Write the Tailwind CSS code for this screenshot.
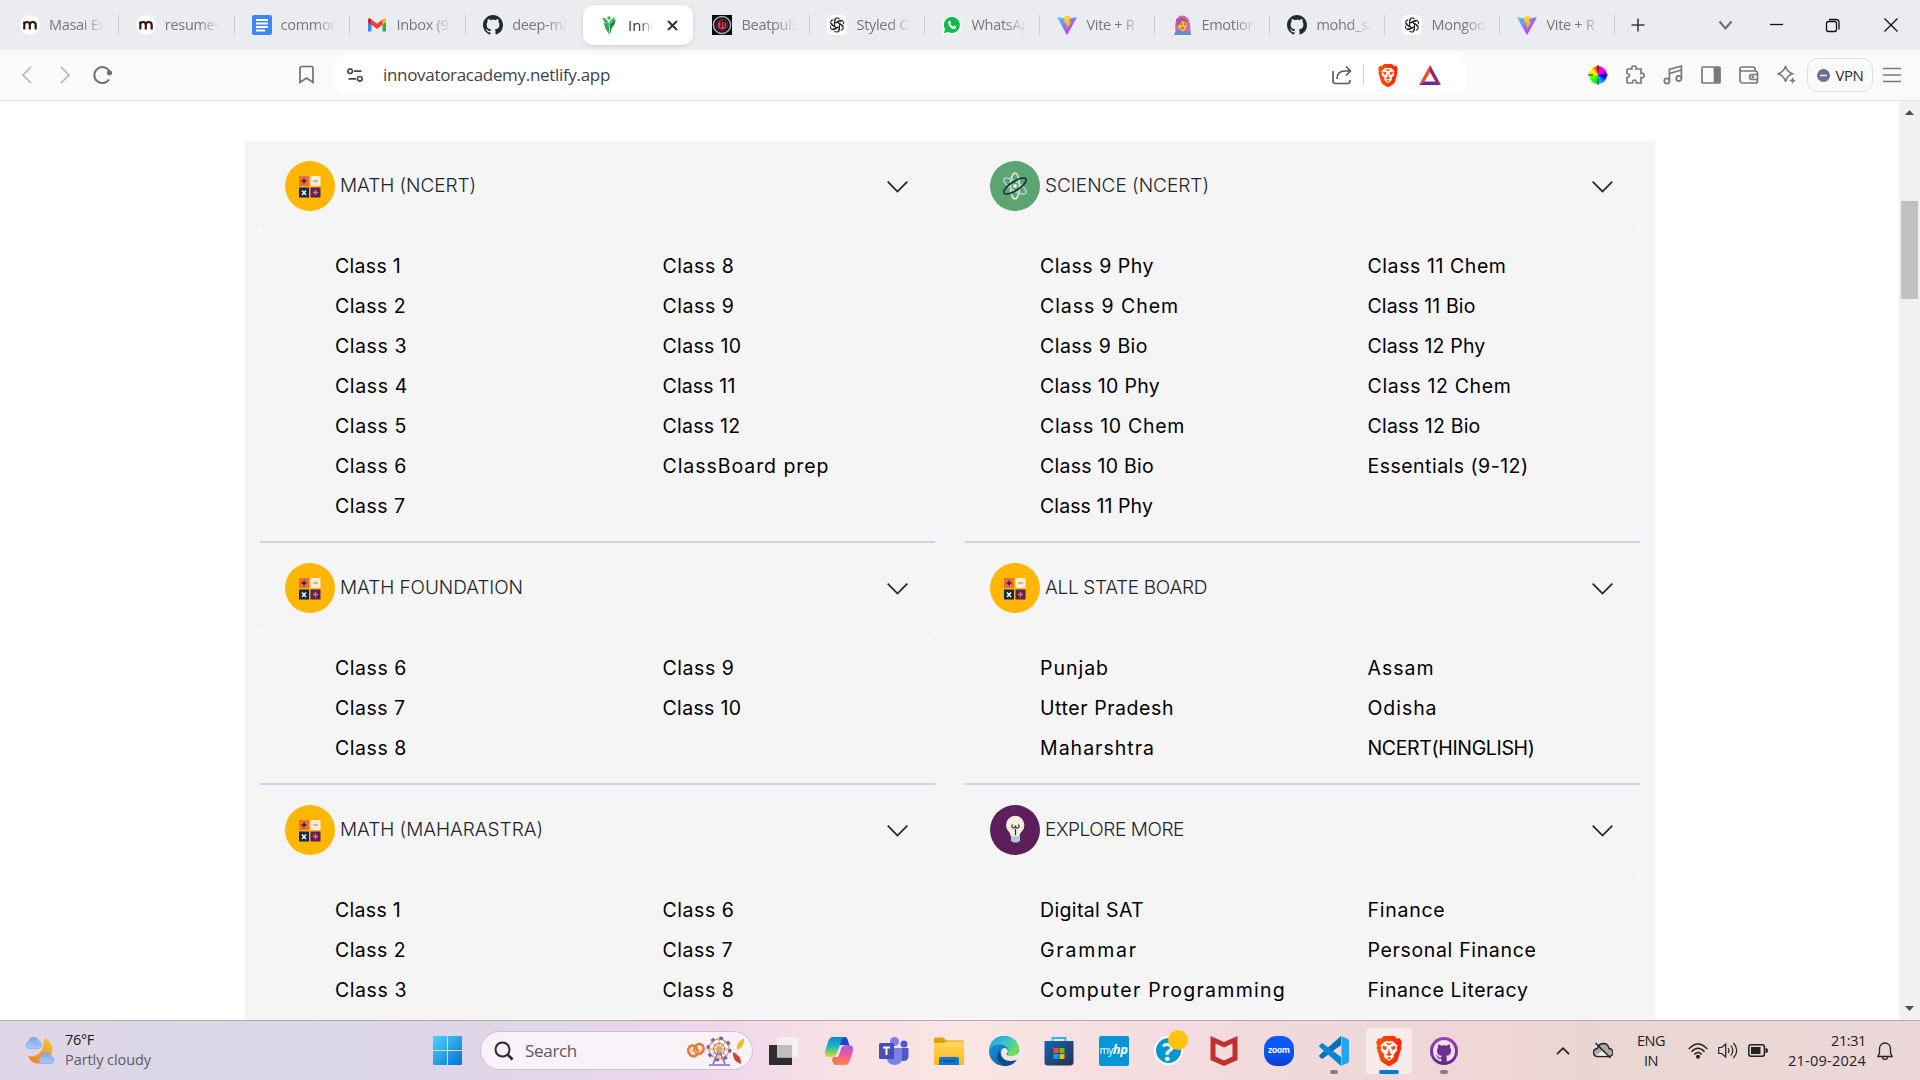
<!DOCTYPE html>
<html lang="en">
<head>
<meta charset="utf-8">
<title>Innovator Academy</title>
<script src="https://cdn.jsdelivr.net/npm/@tailwindcss/browser@4"></script>
</head>
<body class="w-[1920px] h-[1080px] overflow-hidden bg-white flex flex-col font-['Open_Sans','Noto_Sans',sans-serif]">

<svg class="absolute size-0">
  <defs>
    <linearGradient id="gVite" x1="0" y1="0" x2="1" y2="1"><stop offset="0" stop-color="#41d1ff"/><stop offset=".6" stop-color="#a259ff"/><stop offset="1" stop-color="#bd34fe"/></linearGradient>
    <linearGradient id="gBolt" x1="0" y1="0" x2="0" y2="1"><stop offset="0" stop-color="#ffdd35"/><stop offset="1" stop-color="#ffa800"/></linearGradient>
    <linearGradient id="gBrave" x1="0" y1="0" x2="1" y2="0"><stop offset="0" stop-color="#ff5500"/><stop offset="1" stop-color="#ff2000"/></linearGradient>
    <linearGradient id="gWin" x1="0" y1="0" x2="1" y2="1"><stop offset="0" stop-color="#4fd3fc"/><stop offset="1" stop-color="#0670cf"/></linearGradient>
    <linearGradient id="gMoon" x1="0" y1="1" x2="1" y2="0"><stop offset="0" stop-color="#f47b16"/><stop offset="1" stop-color="#f7c637"/></linearGradient>
    <linearGradient id="gCloud" x1="0" y1="0" x2="0" y2="1"><stop offset="0" stop-color="#7fa5ec"/><stop offset="1" stop-color="#a9cbfb"/></linearGradient>
    <linearGradient id="gCopA" x1="0" y1="0" x2="0" y2="1"><stop offset="0" stop-color="#1283dc"/><stop offset=".5" stop-color="#22b8b8"/><stop offset="1" stop-color="#e6d824"/></linearGradient>
    <linearGradient id="gCopB" x1="0" y1="0" x2="0" y2="1"><stop offset="0" stop-color="#a95cf0"/><stop offset=".5" stop-color="#ee5a97"/><stop offset="1" stop-color="#fb8a4a"/></linearGradient>
    <linearGradient id="gFolder" x1="0" y1="0" x2="0" y2="1"><stop offset="0" stop-color="#ffd75e"/><stop offset="1" stop-color="#fcb814"/></linearGradient>
    <linearGradient id="gEdgeA" x1="0" y1="0" x2="1" y2=".6"><stop offset="0" stop-color="#1f9fe0"/><stop offset=".5" stop-color="#35c1d4"/><stop offset="1" stop-color="#6ee058"/></linearGradient>
    <linearGradient id="gEdgeB" x1="0" y1="0" x2="1" y2="1"><stop offset="0" stop-color="#1b9de2"/><stop offset="1" stop-color="#0c4fa0"/></linearGradient>
    <linearGradient id="gStore" x1="0" y1="0" x2="1" y2="1"><stop offset="0" stop-color="#1366b5"/><stop offset="1" stop-color="#28304e"/></linearGradient>
    <linearGradient id="gZoom" x1="0" y1="0" x2="0" y2="1"><stop offset="0" stop-color="#0b5cff"/><stop offset=".6" stop-color="#0b52fa"/><stop offset="1" stop-color="#0a3ad0"/></linearGradient>
    <linearGradient id="gGh" x1="0" y1="0" x2="0" y2="1"><stop offset="0" stop-color="#9c3fc0"/><stop offset="1" stop-color="#5b2a86"/></linearGradient>
    <symbol id="github" viewBox="0 0 16 16"><path d="M8 0C3.58 0 0 3.58 0 8c0 3.54 2.29 6.53 5.47 7.59.4.07.55-.17.55-.38 0-.19-.01-.82-.01-1.49-2.01.37-2.53-.49-2.69-.94-.09-.23-.48-.94-.82-1.13-.28-.15-.68-.52-.01-.53.63-.01 1.08.58 1.23.82.72 1.21 1.87.87 2.33.66.07-.52.28-.87.51-1.07-1.78-.2-3.64-.89-3.64-3.95 0-.87.31-1.59.82-2.15-.08-.2-.36-1.02.08-2.12 0 0 .67-.21 2.2.82.64-.18 1.32-.27 2-.27s1.36.09 2 .27c1.53-1.04 2.2-.82 2.2-.82.44 1.1.16 1.92.08 2.12.51.56.82 1.27.82 2.15 0 3.07-1.87 3.75-3.65 3.95.29.25.54.73.54 1.48 0 1.07-.01 1.93-.01 2.2 0 .21.15.46.55.38A8.01 8.01 0 0 0 16 8c0-4.42-3.58-8-8-8z"/></symbol>
    <symbol id="brave" viewBox="0 0 24 28"><path d="M7 0h10l2.400 2.600 2.800-.4L24 6l-1 3 .6 2-3.400 11.200Q19.600 24 17.800 25L12 28.600 6.200 25Q4.400 24 3.800 22.200L.4 11 1 9 0 6l1.800-3.800 2.800.4z" fill="url(#gBrave)"/><path d="M12 5.200 8.600 4.600 4 8.800l1 1.900-.8 2.400 3.600 4.300-.5 2.200L9 21l3 2.400 3-2.400 1.700-1.400-.5-2.200 3.600-4.300-.8-2.400 1-1.900-4.600-4.200z" fill="#fff"/><path d="M5.800 9.200l4.400.9-1 3.200-2.600-.9zM18.200 9.200l-4.400.9 1 3.200 2.600-.9zM12 10.500l1 5.500 2 1.200-3 1.800-3-1.800 2-1.200zM10 20.500l2-1 2 1-2 1.500zM8.400 6l3.600 1 3.600-1-3.600 3z" fill="#fb4a12"/></symbol>
    <symbol id="vite" viewBox="0 0 20 20"><path d="M.3 2.800 9.600 19.600q.4.700.8 0L19.700 2.800q.3-.6-.5-.6L10 3.800.8 2.200q-.8 0-.5.600z" fill="url(#gVite)"/><path d="M14 .2 7.600 1.400 7.200 8l2.200-.4-.6 3.200 1.800-.4-1 4.300 4.600-7.600-2.300.4z" fill="url(#gBolt)"/></symbol>
    <symbol id="openai" viewBox="0 0 20 20"><rect width="20" height="20" rx="5" fill="#fff"/><g fill="none" stroke="#1d1d1d" stroke-width="1.050"><path id="pt" d="M7.600 10V5.600a2.700 2.700 0 0 1 4.900-1.500M7.600 8.400l3.700-2.100a2.700 2.700 0 0 1 3 .2"/><use href="#pt" transform="rotate(60 10 10)"/><use href="#pt" transform="rotate(120 10 10)"/><use href="#pt" transform="rotate(180 10 10)"/><use href="#pt" transform="rotate(240 10 10)"/><use href="#pt" transform="rotate(300 10 10)"/></g></symbol>
    <symbol id="masai" viewBox="0 0 20 20"><circle cx="10" cy="10" r="10" fill="#fff"/><path d="M4.300 14.500V6.500M4.300 9.500q.4-2.500 2.700-2.500 2.800 0 2.800 3v4.500M9.800 10q.2-3 2.900-3 3 0 3 3v4.500" fill="none" stroke="#3a1510" stroke-width="2.200"/></symbol>
    <symbol id="docs" viewBox="0 0 20 20"><rect width="20" height="20" rx="2" fill="#4285f4"/><path d="M4 5h12M4 8.500h12M4 12h12M4 15.500h9" stroke="#fff" stroke-width="1.800"/></symbol>
    <symbol id="gmail" viewBox="0 0 20 20"><path d="M1 5v11.500h3.500V8z" fill="#4285f4"/><path d="M19 5v11.500h-3.500V8z" fill="#34a853"/><path d="M15.500 4.500V10L19 7V5q0-2-2-1.600z" fill="#fbbc04"/><path d="M1 5v2.200l3.500 3V4.600L3 3.400Q1 3 1 5z" fill="#c5221f"/><path d="M4.500 4.600v5.200L10 14l5.500-4.200V4.600L10 8.800z" fill="#ea4335"/></symbol>
    <symbol id="sprout" viewBox="0 0 20 20"><path d="M10.800 9.500 16.500 3.500q.3 5.500-3.500 9L10.800 20z" fill="#1e8443"/><path d="M4.500 7.500q4 1 5.700 4v8Q6 14 4.500 7.500z" fill="#2fa555"/><path d="M3.500 2.500q5 1 6.500 6.500 1.500-5 5.500-7-1 6-4.500 8.500h-2Q4.500 8 3.500 2.500z" fill="#37b862"/><circle cx="10" cy="3" r="1.700" fill="#37ae5c"/></symbol>
    <symbol id="beat" viewBox="0 0 20 20"><path fill="#080808" d="M0 0h20v20H0z"/><circle cx="10" cy="10" r="8.600" fill="none" stroke="#b6a3c8" stroke-width="1.500"/><circle cx="10" cy="10" r="6" fill="none" stroke="#54405f"/><circle cx="10" cy="10" r="4.500" fill="#d83a55"/><path d="M9 13V7l3-.8v5.600" fill="none" stroke="#320812" stroke-width="1.200"/></symbol>
    <symbol id="wa" viewBox="0 0 20 20"><path d="M0 20 1.500 14.500A9.700 9.700 0 1 1 5.600 18.600z" fill="#fff"/><path d="M2 18l1-4A8 8 0 1 1 6.200 17z" fill="#0abf49"/><path d="M6.500 6.200q1-1.300 1.900 0l.7 1.600-.8 1.200q1 1.900 2.900 2.700l1-1.100 2 1q.3 1.600-1.500 2.400c-3.400.7-7.700-4-6.200-7.800z" fill="#fff"/></symbol>
    <symbol id="emo" viewBox="0 0 20 20"><path d="M4 20Q1 3 9 .5q8-.5 9 8.500l1 11z" fill="#d069b5"/><path d="M6 7q4-4 9 0l-1 7-4 3-4-5z" fill="#f2bd31"/><path d="M2 20q2-6 7-5l3 2 5-1 2 4z" fill="#5e91c7"/><path d="M4 4q8-5 12 4L10 6l-5 6z" fill="#b74ea1"/><path d="M8 9h2M12 9h2M9 13h3" stroke="#713b42"/></symbol>
    <symbol id="math" viewBox="0 0 50 50"><circle cx="25" cy="25" r="25" fill="#fdb602"/><path fill="#f26b35" d="M14 15h10v10H14z"/><path fill="#fbeede" d="M25.500 15h10v10h-10z"/><path fill="#122a4b" d="M14 26.500h10v10H14z"/><path fill="#5d1e5c" d="M25.500 26.500h10v10h-10z"/><path d="M16.500 20h5M19 17.500v5" stroke="#1c2947" stroke-width="1.400"/><path d="M28 20h5" stroke="#ef7b4b" stroke-width="1.200"/><path d="M17 29.500l4 4.500M21 29.500 17 34" stroke="#fff" stroke-width="1.500"/><path d="M28 31.500h5M30.500 28.700v5.600" stroke="#d98168" stroke-width="1.300"/></symbol>
    <symbol id="science" viewBox="0 0 50 50"><circle cx="25" cy="25" r="25" fill="#5ca470"/><g fill="none" stroke-width="1.600"><ellipse cx="25" cy="25" rx="4.500" ry="13" stroke="#e8e9ca"/><ellipse cx="25" cy="25" rx="4.500" ry="13" transform="rotate(-57 25 25)" stroke="#a9d6cf"/><ellipse cx="25" cy="25" rx="4.500" ry="13" transform="rotate(57 25 25)" stroke="#152d4c"/></g><circle cx="25" cy="25" r="2" fill="#f5efd8"/></symbol>
    <symbol id="bulb" viewBox="0 0 50 50"><circle cx="25" cy="25" r="25" fill="#5d1e5b"/><path d="M20.500 31q0-2.500-1.800-4.500A9.200 9.200 0 1 1 31.700 26.500Q29.500 29 29.500 31z" fill="#f6eddf"/><path d="M21 31h9v5.500h-2v1h-5v-1h-2z" fill="#a9cddb"/><path d="M25.500 30v-6M22.500 19.500q-1.500 3.500 1.200 3.500 1.800 0 1.800-2.500 0 2.500 1.800 2.500 2.700 0 1.200-3.500" fill="none" stroke="#23304f" stroke-width="1.200"/></symbol>
  </defs>
</svg>

<!-- Tab strip -->
<header class="h-[50px] shrink-0 bg-[#ebecf0] flex items-center text-[15px] text-[#75777c]">
  <div id="tabs" class="flex items-center pl-[3px] h-full"></div>
  <div class="w-[45px] flex justify-center"><svg class="size-[14px]" viewBox="0 0 14 14"><path d="M7 .5v13M.5 7h13" stroke="#3c3d42" stroke-width="1.600"/></svg></div>
  <div class="ml-auto flex items-center">
    <svg class="w-[51px] h-5" viewBox="-25.500 -10 51 20"><path d="M-6-3.500 0 3.500 6-3.500" fill="none" stroke="#67686d" stroke-width="2"/></svg>
    <svg class="w-[55px] h-5" viewBox="-25.500 -10 55 20"><path d="M-6.500-.5h13" stroke="#111" stroke-width="1.300"/></svg>
    <svg class="w-[56px] h-5" viewBox="-26.500 -10 56 20"><rect x="-6" y="-3.500" width="10" height="10" rx="2" fill="none" stroke="#111" stroke-width="1.300"/><path d="M-3.500-5.500h7q3 0 3 3v7" fill="none" stroke="#111" stroke-width="1.300"/></svg>
    <svg class="w-[58px] h-5" viewBox="-29 -10 58 20"><path d="M-6.500-6.500l13 13M6.500-6.500l-13 13" stroke="#111" stroke-width="1.300"/></svg>
  </div>
</header>

<!-- Toolbar -->
<nav class="h-[51px] shrink-0 bg-[#fafafa] border-b border-[#e7e7ee] flex items-center">
  <svg class="w-[335px] h-10 shrink-0" viewBox="0 0 335 40" fill="none" stroke="#b5b6ba" stroke-width="1.700"><path d="M31 12l-8 8 8 8M61 12l8 8-8 8"/><g stroke="#6e7076" stroke-width="2"><path d="M109 24.500a8 8 0 1 1 .2-8.500"/><circle cx="109.500" cy="17.800" r="1.600" fill="#6e7076"/></g><path d="M300 27.500V13.500q0-2 2-2h9q2 0 2 2v14l-6.500-4.500z" stroke="#6e7076"/></svg>
  <div class="w-[1132px] h-10 shrink-0 bg-white rounded-[12px] flex items-center">
    <svg class="ml-3 size-4" viewBox="0 0 16 16" fill="none" stroke="#45474c" stroke-width="1.700"><circle cx="3.200" cy="4.200" r="2.300"/><path d="M7 4.200h7.500M1.500 11.800H9"/><circle cx="12.800" cy="11.800" r="2.300"/></svg>
    <span data-w="227" class="ml-5 text-[17px] leading-6 text-[#404248] whitespace-nowrap">innovatoracademy.netlify.app</span>
    <div class="ml-auto flex items-center mr-[26px]">
      <svg class="size-5" viewBox="0 0 20 20" fill="none" stroke="#55575d" stroke-width="1.600"><path d="M1 6v10q0 2.500 2.500 2.500h12q2.500 0 2.500-2.500v-1M5 14q0-8 8-8h5M14 1.500 18.500 6 14 10.500"/></svg>
      <div class="w-px h-5 bg-[#cfd0d4] ml-[11px] mr-[14px]"></div>
      <svg class="w-5 h-[23px]"><use href="#brave"/></svg>
      <svg class="ml-[21px] w-[22px] h-[20px]" viewBox="0 0 22 20"><path d="M11 0 0 20l5.500-3.300L11 7z" fill="#ff4724"/><path d="M11 0l11 20-5.500-3.300L11 7z" fill="#9e1f63"/><path d="M0 20h22l-5.500-3.500h-11z" fill="#662d91"/></svg>
    </div>
  </div>
  <div class="ml-auto flex items-center gap-[18px] text-[#77797e] pr-[19px]">
    <div class="relative size-[18px] rounded-full bg-[conic-gradient(#f08,#f0f,#00f,#0af,#0f0,#8f0,#ff0,#f00)]"><svg class="absolute -inset-px size-5" viewBox="0 0 20 20"><path d="M10 0v6M10 14v6M0 10h5M15 10h5" stroke="#222"/></svg></div>
    <svg class="size-5" viewBox="0 0 20 20" fill="none" stroke="currentColor" stroke-width="1.700"><path d="M3 4h4q-1-3 2-3t2 3h5v4.500q3-1 3 2t-3 2V18h-4.500q0-3-2-3t-2 3H3q-1 0-1-1v-4.500q2.500-.5 2.500-2T2 8.500V5q0-1 1-1z"/></svg>
    <svg class="size-5" viewBox="0 0 20 20" fill="none" stroke="currentColor" stroke-width="1.700"><circle cx="3.800" cy="16" r="2.600"/><circle cx="15.800" cy="13.500" r="2.600"/><path d="M6.400 16V4.500L18.400 1v12.500M6.400 8.500l12-3.500"/></svg>
    <svg class="size-5" viewBox="0 0 20 20" fill="none" stroke="currentColor" stroke-width="1.700"><rect x="1" y="2" width="18" height="16" rx="1"/><path d="M13.500 3h5v14h-5z" fill="currentColor"/></svg>
    <svg class="size-5" viewBox="0 0 20 20" fill="none" stroke="currentColor" stroke-width="1.700"><path d="M16 6V4q0-2-2-2H3Q1 2 1 4t2 2h13q2.500 0 2.500 2v8q0 2-2 2H4q-3 0-3-3V4M18.500 9.500H13q-2.500 0-2.500 2.500t2.500 2.500h5.500"/><circle cx="13.800" cy="12" r=".6"/></svg>
    <svg class="size-5" viewBox="0 0 20 20" fill="none" stroke="currentColor" stroke-width="1.500"><path d="M8.500 1q1.300 5.800 7 7.800-5.700 2-7 8-1.300-6-7.500-8Q7.200 6.800 8.500 1z"/><path d="M15.500 12l1 2.500 2.500 1-2.500 1-1 2.500-1-2.500-2.500-1 2.500-1z" fill="currentColor" stroke="none"/></svg>
    <div class="-ml-[8px] w-[66px] h-[34px] rounded-[11px] border border-[#dedfe6] flex items-center justify-center gap-[6px] text-[#2b2d33]">
      <svg class="size-[13px]" viewBox="0 0 14 14"><circle cx="7" cy="7" r="7" fill="#6a7090"/><path d="M3.500 7h7" stroke="#fff" stroke-width="1.600"/></svg>
      <span data-w="28" class="text-[15px]">VPN</span>
    </div>
    <svg class="-ml-[8px] w-[18px] h-4" viewBox="0 0 18 16"><path d="M0 1.500h18M0 8h18M0 14.500h18" stroke="#77797e" stroke-width="1.700"/></svg>
  </div>
</nav>

<!-- Page -->
<div class="h-[919px] shrink-0 flex overflow-hidden">
  <main class="flex-1 h-full overflow-hidden pt-10 pl-[245px] font-['Inter','Open_Sans',sans-serif]">
    <div id="courses" class="w-[1410px] h-[900px] bg-[#f5f5f5] grid grid-cols-2"></div>
  </main>
  <aside class="w-[21px] bg-[#f1f1f1] flex flex-col items-center">
    <svg class="mt-[9px] w-[9px] h-[5px]" viewBox="0 0 9 5"><path d="M4.500 0 9 5H0z" fill="#505050"/></svg>
    <div class="mt-[86px] w-[17px] h-[98px] bg-[#c1c1c1]"></div>
    <svg class="mt-auto mb-[9px] w-[9px] h-[5px]" viewBox="0 0 9 5"><path d="M0 0h9L4.500 5z" fill="#505050"/></svg>
  </aside>
</div>

<!-- Taskbar -->
<footer class="h-[60px] shrink-0 border-t border-[#b5aab4] flex items-center bg-[linear-gradient(90deg,#dfd6e7_0px,#dad8e8_250px,#dfd6e8_480px,#efd6ec_700px,#f6e0e5_830px,#fae6e3_960px,#f4dce1_1160px,#f0d9da_1330px,#f0d6d6_1500px,#ead6d1_1580px,#ebd7d8_1920px)]">
  <div class="w-[420px] h-full flex items-center pl-[25px] gap-[10px]">
    <svg class="w-[30px] h-[28px]" viewBox="0 0 30 28"><path d="M19 1c9 3 11 14 5 21-6 7-18 6-21-3 7 2 17-3 16-18z" fill="url(#gMoon)"/><path id="cl" d="M3.500 11.500a3.700 3.700 0 0 1 0-7Q5 0 9 .5q4 .2 5 4a3.700 3.700 0 0 1 0 7z" fill="url(#gCloud)" stroke="#7196e0" stroke-width=".5"/><use href="#cl" x="12.500" y="15"/></svg>
    <div class="flex flex-col leading-5 text-[14.500px] pb-px whitespace-nowrap"><span data-w="29" class="text-[#1c1a20] self-start">76°F</span><span data-w="86" class="text-[#5d5963] self-start">Partly cloudy</span></div>
  </div>
  <div class="w-[55px] flex justify-center"><svg class="size-[29px]" viewBox="0 0 29 29"><path d="M1 0h13v14H0V1q0-1 1-1zM15 0h13q1 0 1 1v13H15zM0 15h14v14H1q-1 0-1-1zM15 15h14v13q0 1-1 1H15z" fill="url(#gWin)"/></svg></div>
  <div class="ml-[5px] w-[273px] h-[39px] rounded-full bg-[#f7f3f9] border border-[#cfbfd3] flex items-center pl-[13px] pr-[7px]">
    <svg class="size-5" viewBox="0 0 20 20" fill="none" stroke="#2c2a30"><circle cx="8.500" cy="8.500" r="7" stroke-width="2"/><path d="M13.500 13.500l5 5" stroke-width="2.600"/></svg>
    <span data-w="52" class="ml-[11px] text-[17px] text-[#5c5961]">Search</span>
    <svg class="ml-auto w-[58px] h-[30px]" viewBox="0 0 58 30" fill="none"><g stroke="#e8793b" stroke-width="2.600"><ellipse cx="6" cy="15" rx="4.500" ry="5.500" transform="rotate(-25 6 15)"/><ellipse cx="12" cy="13" rx="4.500" ry="5" transform="rotate(30 12 13)"/></g><path d="M3 13q5 6 12 1" stroke="#f6b169" stroke-width="1.200"/><path d="M32 14 26 28M32 14l6 14M22 29h21" stroke="#8a62ce" stroke-width="1.600"/><circle cx="32" cy="13" r="10" stroke="#f0a13a" stroke-width="1.300"/><circle cx="32" cy="13" r="11" stroke="#7756c6" stroke-width="3" stroke-dasharray="3.600 5.040"/><path d="M32 3v20M22 13h20M25 6l14 14M39 6 25 20" stroke="#e99a42"/><circle cx="32" cy="13" r="5.500" stroke="#7f68cd"/><circle cx="32" cy="13" r="3" fill="#f4a92a"/><path d="M50 14q-2-7 7-12 1 9-7 12z" fill="#f6bd28"/><path d="M54 28q-9-3-8-12 9 4 8 12z" fill="#d24032"/></svg>
  </div>
  <div class="ml-[3px] flex items-center h-full">
    <div class="w-[55px] flex justify-center"><svg class="size-[30px]" viewBox="0 0 30 30"><path d="M0 9h23v20H0z" fill="#2e2d2d"/><path d="M9 1h19q1.500 0 1.500 1.500v19H8V2z" fill="#f3f1f1" fill-opacity=".93"/><path d="M8 9h15v12.500H8z" fill="#bebebe"/></svg></div>
    <div class="w-[55px] flex justify-center"><svg class="size-[30px]" viewBox="0 0 30 30"><path d="M14 1h7q2 0 2.800 3l1.500 5H14z" fill="#154bc0"/><path d="M21 29H10q2-1 3-5l4-11q1.200-4 5-4h3q5 0 4 6l-3 9q-1.500 5-5 5z" fill="url(#gCopB)"/><path d="M9 21h6l-1 4q-1 3-3 4-2-1-3-5z" fill="#f27850"/><path d="M9 1h11q-2 1-3 5l-4 11q-1.200 4-5 4H5q-5 0-4-6l3-9Q5.500 1 9 1z" fill="url(#gCopA)"/></svg></div>
    <div class="w-[55px] flex justify-center"><svg class="size-[30px]" viewBox="0 0 30 30"><circle cx="25" cy="8" r="3.500" fill="#5059c9"/><circle cx="15.500" cy="5.500" r="4.500" fill="#7b83eb"/><path d="M20 12h9.500v8q0 5-5 5H20z" fill="#5059c9"/><path d="M8 12h15v10q0 7-7.500 7T8 22z" fill="#7b83eb"/><rect y="7" width="15" height="16" rx="1.500" fill="#464eb8"/><path d="M4 11.500h7M7.500 11.500V19" stroke="#fff" stroke-width="2"/></svg></div>
    <div class="w-[55px] flex justify-center"><svg class="size-[30px]" viewBox="0 0 30 30"><path d="M0 3q0-1.500 1.500-1.500H9l3.500 3H29q1 0 1 1V12H0z" fill="#dda109"/><path d="M0 7h10l3-1.500h17V28q0 1-1 1H1q-1 0-1-1z" fill="url(#gFolder)"/><path d="M5 29v-6q0-2 2-2h16q2 0 2 2v6z" fill="#0d77cc"/><path d="M9 25h12" stroke="#074c94" stroke-width="1.500"/></svg></div>
    <div class="w-[55px] flex justify-center"><svg class="size-[30px]" viewBox="0 0 30 30"><circle cx="15" cy="15" r="15" fill="url(#gEdgeB)"/><path d="M11 14c-1 7 5 12 11 11.500 3 0 5-1 6-2-3 5-8 6.500-12 6.500-8-2-10-10-5-16z" fill="#114a8b"/><path d="M0 14C1 5 7 0 15 0c9 0 15 6 15 12.500 0 5-3 7.500-7 7.500-3 0-5-1-4.500-2.500C20 16 20 11 14 9 8 7.500 2 10 0 14z" fill="url(#gEdgeA)"/><path d="M15 12c-4 1-4 8 0 11 4 3 10 2.500 15-1v-6q-3 4-7 4-3 0-5-1-1-.6 0-1.800 1.500-1.700.5-3.700-1-1.700-3.500-1.500z" fill="#f7e2e2"/></svg></div>
    <div class="w-[55px] flex justify-center"><svg class="size-[30px]" viewBox="0 0 30 30"><path d="M8.500 6V2h13v4" fill="none" stroke="#2bb6ee" stroke-width="1.800"/><path d="M.5 5h29v21q0 3.500-3.500 3.500H4Q.5 29.500.5 26z" fill="url(#gStore)"/><path d="M9.500 12H14.500v5h-5z" fill="#f25022"/><path d="M15.500 12H20.500v5h-5z" fill="#7fba00"/><path d="M9.500 18H14.500v5h-5z" fill="#00a4ef"/><path d="M15.500 18H20.500v5h-5z" fill="#ffb900"/></svg></div>
    <div class="w-[55px] flex justify-center"><div class="size-[30px] rounded-[2px] bg-[#0696d7] text-white flex items-center justify-center text-[10px] pb-px tracking-[-0.500px]"><span>my</span><b class="italic text-[13px]">hp</b></div></div>
    <div class="w-[55px] flex justify-center"><div class="relative size-[29px] mr-[1px] rounded-full bg-[#0895d3] border-2 border-white text-white text-[25px] leading-6 font-bold flex items-center justify-center">?<div class="absolute -right-[7px] -top-[8px] size-5 rounded-full bg-[#ffc20e]"></div></div></div>
    <div class="w-[55px] flex justify-center"><svg class="size-[30px]" viewBox="0 0 30 30"><path d="M1.500 0 15 6 28.500 0v24L15 30 1.500 24zM6.500 7.500v13L15 24.500l8.500-4v-13L15 11.500z" fill="#c0302f" fill-rule="evenodd"/></svg></div>
    <div class="w-[55px] flex justify-center"><div class="relative size-[30px] text-white"><svg class="absolute inset-0 size-[30px]" viewBox="0 0 30 30"><rect width="30" height="30" rx="12.500" fill="url(#gZoom)"/></svg><span class="absolute inset-0 text-center text-[8.500px] leading-[28px] font-bold tracking-[-0.300px] font-['Inter']">zoom</span></div></div>
    <div class="w-[55px] h-full relative flex items-center justify-center"><svg class="size-[30px]" viewBox="0 0 30 30"><path d="M22 0v9L4 22.500q-.8.500-1.500 0L.5 20.700q-.8-.8 0-1.600z" fill="#0070ba"/><path d="M22 30v-9L4 7.500q-.8-.500-1.500 0L.5 9.300q-.8.800 0 1.600z" fill="#0a85d0"/><path d="M22 0l7 3q1 .5 1 1.500v21q0 1-1 1.500l-7 3q1-.5.500-2V2q.5-1-.5-2z" fill="#28a5f2"/></svg><i class="absolute bottom-[6px] w-2 h-1 rounded-full bg-[#8b7c7f]"></i></div>
    <div class="w-[55px] h-full relative flex items-center justify-center"><div class="w-12 h-[48px] rounded-[5px] bg-[#f7ebeb] border border-[#ead9da] flex items-center justify-center"><svg class="w-[26px] h-[30px]"><use href="#brave"/></svg></div><i class="absolute bottom-[6px] w-5 h-1 rounded-full bg-[#0878d4]"></i></div>
    <div class="w-[55px] h-full relative flex items-center justify-center"><svg class="size-[28px]" viewBox="0 0 28 28"><circle cx="14" cy="14" r="14" fill="url(#gGh)"/><circle cx="14" cy="14" r="10.700" fill="#6f2e93"/><svg x="3" y="3" width="22" height="22" viewBox="0 0 16 16"><circle cx="8" cy="8" r="7.800" fill="#6f2e93"/><path d="M8 0C3.580 0 0 3.580 0 8a8 8 0 0 0 5.470 7.590c.4.070.55-.17.55-.38v-1.490c-2.010.370-2.530-.49-2.690-.94-.09-.23-.48-.94-.82-1.130-.28-.15-.68-.52-.01-.53.630-.01 1.080.580 1.230.820.720 1.210 1.870.870 2.330.660.070-.52.280-.87.510-1.070-1.780-.2-3.640-.89-3.640-3.950 0-.87.310-1.590.820-2.150-.08-.2-.36-1.020.080-2.120 0 0 .670-.21 2.200.820a7.600 7.600 0 0 1 4 0c1.530-1.040 2.200-.82 2.200-.82.440 1.100.160 1.920.080 2.120.510.560.820 1.270.820 2.150 0 3.070-1.870 3.750-3.650 3.950.290.250.540.730.540 1.480v2.200c0 .210.150.460.550.380A8 8 0 0 0 16 8c0-4.420-3.580-8-8-8z" fill="#f1e0f0"/></svg></svg><i class="absolute bottom-[6px] w-2 h-1 rounded-full bg-[#8b7c7f]"></i></div>
  </div>
  <div class="ml-auto h-full flex items-center pr-[27px] text-[#242124] text-[14.500px] leading-5 whitespace-nowrap">
    <svg class="w-[14px] h-2" viewBox="0 0 14 8"><path d="M1 7.200 7 1.200l6 6" fill="none" stroke="#242124" stroke-width="1.700"/></svg>
    <svg class="ml-[23px] w-5 h-[17px]" viewBox="0 0 20 17"><path d="M4.500 14.500a4 4 0 0 1-.2-8Q6 1.500 10.500 1.500t5.500 5a4 4 0 0 1 0 8z" fill="#aaa" stroke="#242124" stroke-width="1.400"/><path d="M3 13.500 9 9l7 5z" fill="#eee"/><path d="M2.500 1l15 15" stroke="#242124" stroke-width="1.500"/></svg>
    <div class="ml-6 w-[28px] flex flex-col items-center"><span data-w="28">ENG</span><span data-w="14">IN</span></div>
    <svg class="ml-[23px] w-5 h-4" viewBox="0 0 20 16" fill="none" stroke="#242124" stroke-width="1.400"><path d="M.7 6Q10-4 19.300 6M3.500 8.800q6.500-7 13 0M6.300 11.500q3.700-4 7.400 0"/><circle cx="10" cy="13.800" r="1.300" fill="#242124"/></svg>
    <svg class="ml-[10px] w-5 h-[17px]" viewBox="0 0 20 17" fill="none" stroke="#242124" stroke-width="1.200"><path d="M.7 5.500h3l4-3.500v13l-4-3.500h-3zM10 6q2 2.500 0 5M12.800 3.500q4 5 0 10M15.500 1q6.500 7.500 0 15"/></svg>
    <svg class="ml-[10px] w-5 h-[13px]" viewBox="0 0 20 13"><rect x=".8" y=".8" width="15.600" height="11.400" rx="2.200" fill="none" stroke="#242124" stroke-width="1.500"/><rect x="3" y="3" width="9.500" height="7" fill="#242124"/><path d="M17.500 4q2.500 0 2.500 2.500T17.500 9z" fill="#242124"/></svg>
    <div class="ml-[20px] w-[78px] flex flex-col items-end"><span data-w="35">21:31</span><span data-w="78">21-09-2024</span></div>
    <svg class="ml-[11px] w-4 h-[18px]" viewBox="0 0 16 18" fill="none" stroke="#242124" stroke-width="1.300"><path d="M.8 14.500h14.400L13.500 11V6.500a5.500 5.500 0 0 0-11 0V11zM5.500 15a2.500 2.500 0 0 0 5 0"/></svg>
  </div>
</footer>

<script>
const tabs = [['masai','Masai Ex'],['masai','resume-'],['docs','common'],['gmail','Inbox (9'],['github','deep-ma'],['sprout','Inno'],['beat','Beatpuls'],['openai','Styled C'],['wa','WhatsAp'],['vite','Vite + R'],['emo','Emotion'],['github','mohd_sa'],['openai','Mongoo'],['vite','Vite + R']];
document.getElementById('tabs').innerHTML = tabs.map(([icon, label], i) => i === 5
  ? `<div class="w-[113.500px] h-full flex items-center"><div class="ml-[1px] w-[110px] h-10 rounded-[10px] bg-white shadow-[0_1px_4px_rgba(0,0,0,0.120)] flex items-center pl-[16px] text-[#303136]"><svg class="size-5 shrink-0"><use href="#${icon}"/></svg><span class="ml-[9px] w-[26px] overflow-hidden whitespace-nowrap mask-r-from-40%">${label}</span><svg class="ml-[13px] size-[11px]" viewBox="0 0 11 11"><path d="M1 1l9 9M10 1l-9 9" stroke="#303136" stroke-width="1.900"/></svg></div></div>`
  : `<div class="${i < 5 ? 'w-[115.800px]' : 'w-[115px]'} h-5 flex items-center pl-[17px] border-r ${i !== 4 ? 'border-[#c9cace]' : 'border-transparent'}"><svg class="size-5 shrink-0 fill-[#24292f]"><use href="#${icon}"/></svg><span class="ml-[9px] w-[56px] text-[14.500px] tracking-[-0.300px] overflow-hidden whitespace-nowrap mask-r-from-60%">${label}</span></div>`).join('');

const columns = [
  [['math','MATH (NCERT)',136,[[['Class 1',66],['Class 2',71],['Class 3',72],['Class 4',73],['Class 5',72],['Class 6',72],['Class 7',70.5]],[['Class 8',72],['Class 9',72],['Class 10',79],['Class 11',73],['Class 12',78],['ClassBoard prep',167]]]],
   ['math','MATH FOUNDATION',183,[[['Class 6',72],['Class 7',70.5],['Class 8',72]],[['Class 9',72],['Class 10',79]]]],
   ['math','MATH (MAHARASTRA)',203,[[['Class 1',66],['Class 2',71],['Class 3',72]],[['Class 6',72],['Class 7',70.5],['Class 8',72]]]]],
  [['science','SCIENCE (NCERT)',164,[[['Class 9 Phy',114],['Class 9 Chem',139],['Class 9 Bio',108],['Class 10 Phy',120],['Class 10 Chem',145],['Class 10 Bio',114],['Class 11 Phy',113]],[['Class 11 Chem',139],['Class 11 Bio',108],['Class 12 Phy',118],['Class 12 Chem',144],['Class 12 Bio',113],['Essentials (9-12)',161]]]],
   ['math','ALL STATE BOARD',162,[[['Punjab',69],['Utter Pradesh',134],['Maharshtra',115]],[['Assam',67],['Odisha',70],['NCERT(HINGLISH)',167]]]],
   ['bulb','EXPLORE MORE',139,[[['Digital SAT',104],['Grammar',98],['Computer Programming',246]],[['Finance',78],['Personal Finance',169],['Finance Literacy',161]]]]]
];
const list = items => `<ul class="w-[327.500px] shrink-0">${items.map(([t, w]) => `<li class="h-10 pt-[2px] flex items-center"><span data-w="${w}" class="text-[19.500px] text-black whitespace-nowrap">${t}</span></li>`).join('')}</ul>`;
document.getElementById('courses').innerHTML = columns.map(sections => `<div class="px-[15px] min-w-0">${sections.map(([icon, title, w, lists]) => `
  <section class="border-b-2 border-[#cfcfe8]">
    <div class="bg-white"><div class="h-[90px] bg-[#f5f5f5] rounded-b-[5px] flex items-center pl-[25px] pr-[27px]">
      <svg class="size-[50px]"><use href="#${icon}"/></svg>
      <span data-w="${w}" class="ml-[5px] text-[19px] font-light text-[#212529] whitespace-nowrap">${title}</span>
      <svg class="ml-auto mt-[2px] w-[21px] h-[12px]" viewBox="0 0 21 12"><path d="M.7.700 10.500 10.500 20.300.700" fill="none" stroke="#212529" stroke-width="1.700"/></svg>
    </div></div>
    <div class="py-[15px] pl-[75px] flex">${lists.map(list).join('')}</div>
  </section>`).join('')}</div>`).join('');

// Track each label out to its set width.
function fitLabels() {
  document.querySelectorAll('[data-w]').forEach(el => {
    el.style.letterSpacing = '0px';
    const range = document.createRange();
    range.selectNodeContents(el);
    const diff = Number(el.dataset.w) - range.getBoundingClientRect().width;
    el.style.letterSpacing = (diff / el.textContent.length).toFixed(3) + 'px';
  });
}
fitLabels();
window.addEventListener('load', () => { fitLabels(); document.fonts.ready.then(fitLabels); });
</script>
</body>
</html>
